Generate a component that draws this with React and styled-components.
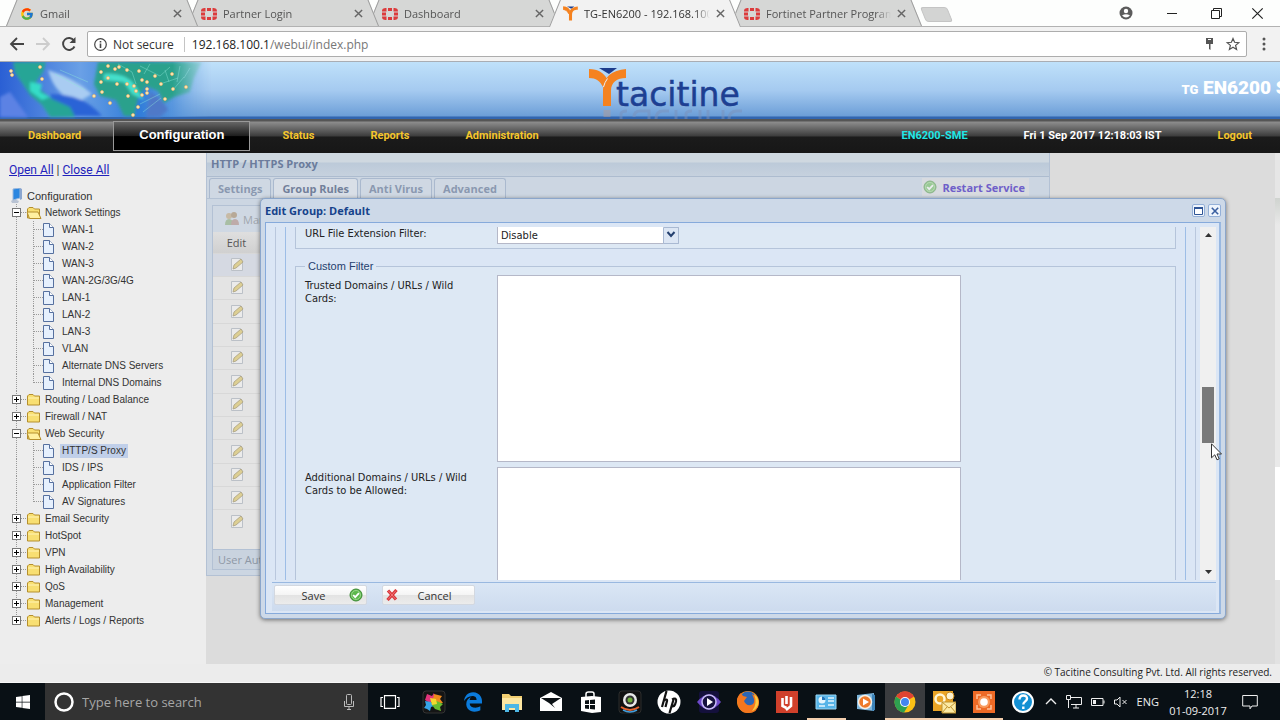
import { useState } from 'react';
import styled, { createGlobalStyle } from 'styled-components';
import { FcGoogle } from 'react-icons/fc';
import { FaWindows, FaEdgeLegacy } from 'react-icons/fa6';

const GlobalStyle = createGlobalStyle`
  * {
    box-sizing: border-box;
  }

  body {
    margin: 0;
    font-family: Roboto, Arial, sans-serif;
    font-size: 11px;
    color: #333;
  }

  button {
    padding: 0;
    border: 0;
    background: none;
    font: inherit;
    color: inherit;
  }

  svg {
    display: block;
    flex: none;
  }
`;

const UI_FONT = "'Open Sans', 'Noto Sans', sans-serif";
const FORM_FONT = "'DejaVu Sans Condensed', 'Noto Sans', sans-serif";
const PAGE_FONT = "'Liberation Sans', Arial, sans-serif";

const Screen = styled.div`
  min-height: 100vh;
  display: flex;
  flex-direction: column;
  overflow: hidden;
`;

/* ---------- browser ---------- */

const TabStrip = styled.div`
  height: 27px;
  display: flex;
  padding-left: 8px;
  background-color: #fdfefd;
  border-bottom: 1px solid #b2b2b2;
  font-family: ${UI_FONT};
`;

const TabBox = styled.div`
  position: relative;
  z-index: ${(props) => props.$order};
  flex: 0 1 181px;
  min-width: 0;
  height: 27px;
  display: flex;
  align-items: center;
  gap: 6px;
  padding: 0 7px 0 12px;
  font-size: 11px;
  color: ${(props) => (props.$active ? '#333' : '#555')};

  &::before,
  &::after {
    content: '';
    position: absolute;
    z-index: -1;
    top: 0;
    bottom: ${(props) => (props.$active ? '0' : '1px')};
    background-color: ${(props) => (props.$active ? '#f2f2f2' : '#d6d7d6')};
  }

  &::before {
    left: -2px;
    right: 50%;
    border-left: 1px solid #9c9c9c;
    transform: skewX(-22deg);
    transform-origin: bottom left;
  }

  &::after {
    left: 48%;
    right: -9px;
    border-right: 1px solid #9c9c9c;
    transform: skewX(22deg);
    transform-origin: bottom right;
  }
`;

const TabTitle = styled.span`
  flex: 1;
  overflow: hidden;
  white-space: nowrap;
  mask-image: linear-gradient(to right, #000 88%, transparent);
`;

const NewTab = styled.button`
  width: 27px;
  height: 15px;
  margin: 7px 0 0 10px;
  background-color: #d3d4d3;
  border: 1px solid #c4c4c4;
  border-radius: 3px;
  transform: skewX(22deg);
`;

const WindowControls = styled.div`
  margin-left: auto;
  display: flex;
  align-items: center;
  gap: 29px;
  padding-right: 16px;
`;

const Toolbar = styled.div`
  height: 35px;
  display: flex;
  align-items: center;
  gap: 10px;
  padding: 0 10px 0 9px;
  background-color: #f2f2f2;
  border-bottom: 1px solid #a9adb3;
`;

const Address = styled.div`
  flex: 1;
  height: 26px;
  display: flex;
  align-items: center;
  gap: 6px;
  padding: 0 6px;
  background-color: #fff;
  border: 1px solid #adadad;
  border-radius: 2px;
  font-family: ${UI_FONT};
  font-size: 12px;
  color: #333;
`;

const Divider = styled.span`
  width: 1px;
  height: 15px;
  margin: 0 1px 0 4px;
  background-color: #c4c4c4;
`;

const Url = styled.span`
  flex: 1;
  color: #777;

  b {
    font-weight: 400;
    color: #222;
  }
`;

/* ---------- page header ---------- */

// the banner is wider than the page and runs off its right side
const Banner = styled.header`
  height: 57px;
  display: grid;
  grid-template-columns: 1fr auto 1fr;
  margin-right: -50px;
  background: linear-gradient(#bfe1fa, #a5caf0 50%, #6d9fd8 94%, #3165b0 97%);
`;

const Model = styled.div`
  justify-self: end;
  align-self: center;
  padding: 0 15px 4px 0;
  white-space: nowrap;
  font-family: Impact, Roboto, sans-serif;
  font-weight: 900;
  font-size: 19px;
  line-height: 24px;
  color: #fff;

  small {
    font-size: 13px;
  }
`;

const NavBar = styled.nav`
  height: 34px;
  display: flex;
  align-items: center;
  background: linear-gradient(#555 2px, #8d8d8d 3px, #3c3c3c 17px, #1b1b1b 18px, #171717);
  font-weight: 700;
  line-height: 14px;
`;

const NavLink = styled.a`
  padding: 0 28px;
  color: #f5c62c;
  text-decoration: none;
`;

const CurrentLink = styled.a`
  height: 30px;
  margin: 0 4px;
  padding: 0 25px;
  border: 1px solid #999;
  background: linear-gradient(#666, #1d1d1d 50%, #000 52%);
  font-family: ${PAGE_FONT};
  font-size: 13px;
  line-height: 26px;
  color: #fff;
  text-decoration: none;
`;

const NavText = styled.span`
  padding: 0 28px;
  margin-left: ${(props) => (props.$push ? 'auto' : '0')};
  color: ${(props) => props.$color};
`;

/* ---------- tree ---------- */

const Main = styled.div`
  flex: 1;
  display: flex;
`;

const Sidebar = styled.aside`
  flex: none;
  width: 206px;
  padding: 9px 0 0 9px;
  background-color: #ededed;
  font-family: ${PAGE_FONT};
`;

const TreeActions = styled.div`
  font-family: Roboto, Arial, sans-serif;
  font-size: 12px;
  line-height: 17px;

  a {
    color: #2222bb;
  }
`;

const Tree = styled.ul`
  margin: 8px 0 0;
  padding: 0;
  list-style: none;
`;

const TreeRow = styled.li`
  height: 17px;
  display: flex;
  align-items: center;
  font-size: ${(props) => (props.$root ? '11px' : '10px')};
`;

const Toggle = styled.button`
  height: 17px;
`;

const TreeLink = styled.a`
  margin-left: ${(props) => props.$gap};
  padding: 0 2px;
  line-height: 14px;
  white-space: nowrap;
  color: #333;
  text-decoration: none;
  background-color: ${(props) => (props.$current ? '#c0cfe9' : 'transparent')};
`;

/* ---------- proxy panel ---------- */

const Content = styled.main`
  position: relative;
  flex: 1;
  min-width: 0;
  background-color: #dcdcdc;
`;

const Edge = styled.div`
  flex: none;
  width: 5px;
  background: linear-gradient(#e6e6e6 45px, #cfd3cf 45px, #e9e9e9 72px, #e9e9e9 314px, #fff 314px, #fff 427px, #e2e2e2 427px);
`;

const Panel = styled.section`
  display: flex;
  flex-direction: column;
  height: calc(100% - 88px);
  margin-right: 225px;
  background-color: #ccd6e2;
  border: 1px solid #b3c1d4;
  border-top: 0;
  font-family: ${UI_FONT};
`;

const PanelTitle = styled.h1`
  margin: 0;
  padding: 0 4px;
  height: 24px;
  line-height: 22px;
  font-size: 11px;
  background: linear-gradient(#cfd8e0 9px, #bccad9 10px, #c6d1de);
  border-bottom: 1px solid #adbccf;
  color: #6b7c9c;
`;

const PanelTabs = styled.div`
  display: flex;
  align-items: flex-end;
  gap: 2px;
  height: 22px;
  padding: 0 20px 0 2px;
  border-bottom: 1px solid #b4c2d4;
`;

const PanelTab = styled.button`
  height: 20px;
  padding: 0 8px;
  border: 1px solid #aab9ce;
  border-bottom: 0;
  border-radius: 3px 3px 0 0;
  background-color: ${(props) => (props.$active ? '#d9dfe7' : '#cfd8e3')};
  font-weight: 700;
  color: ${(props) => (props.$active ? '#72809a' : '#8a98b0')};
`;

const Restart = styled.button`
  display: flex;
  align-items: center;
  gap: 5px;
  height: 18px;
  margin: 0 0 2px auto;
  padding: 0 4px 0 1px;
  background-color: #d8dbe0;
  font-weight: 700;
  color: #6f5fc9;
`;

const PanelBody = styled.div`
  flex: 1;
  display: flex;
  flex-direction: column;
  margin: 6px 5px 5px;
  background-color: #e4e4e4;
  border: 1px solid #b3c1d4;
`;

const GridToolbar = styled.div`
  display: flex;
  align-items: center;
  gap: 3px;
  height: 26px;
  padding-left: 11px;
  background-color: #cfd8e3;
  color: #a0a6ad;
`;

const Grid = styled.table`
  width: 100%;
  border-collapse: collapse;
  table-layout: fixed;

  th {
    height: 21px;
    padding: 0;
    background: linear-gradient(#dfdfdf, #d0d0d0);
    font-weight: 400;
    color: #555;
  }

  td {
    height: 23px;
    padding: 0;
    border-top: 1px solid #d8d8d8;
  }

  tr:nth-child(3n) td {
    height: 24px;
  }

  tr:first-child td {
    background-color: #d5d9e2;
  }

  svg {
    margin: 0 auto;
  }
`;

const GridFooter = styled.div`
  margin-top: auto;
  padding: 0 5px;
  line-height: 19px;
  background-color: #c9d3df;
  border-top: 1px solid #b3c1d4;
  color: #8e97a5;
`;

/* ---------- edit window ---------- */

const Dialog = styled.section`
  position: absolute;
  z-index: 2;
  top: 45px;
  right: 49px;
  bottom: 45px;
  left: 54px;
  display: flex;
  flex-direction: column;
  padding: 0 4px 4px;
  background-color: #cdd9e8;
  border: 1px solid #8ba6cb;
  border-radius: 5px;
  box-shadow: 0 1px 4px rgba(0, 0, 0, 0.5);
  font-family: ${UI_FONT};
`;

const DialogHeader = styled.header`
  display: flex;
  align-items: center;
  gap: 3px;
  height: 23px;
`;

const DialogTitle = styled.h2`
  flex: 1;
  margin: 0;
  font-size: 11px;
  color: #15428b;
`;

const DialogTool = styled.button`
  width: 13px;
  height: 13px;
  display: grid;
  place-items: center;
  background-color: #eef4fc;
  border: 1px solid #94b0d8;
  border-radius: 2px;
`;

const DialogBody = styled.div`
  flex: 1;
  min-height: 0;
  display: flex;
  flex-direction: column;
  padding: 4px 3px 2px 6px;
  background-color: #dbe6f5;
  border: 1px solid #86aadb;
  border-right: 2px solid #99b8e0;
`;

const Viewport = styled.div`
  flex: 1;
  min-height: 0;
  display: flex;
  gap: 4px;
  padding-left: 3px;
  overflow: hidden;
`;

const Frame = styled.div`
  flex: 1;
  min-width: 0;
  height: 900px;
  padding: 0 9px;
  border: 1px solid ${(props) => props.$line};
  border-width: 0 1px;
`;

const formBox = `
  margin: 0;
  border: 1px solid #b5c4da;
  background-color: #dde8f4;
`;

const FilterBox = styled.div`
  ${formBox}
  height: 22px;
  padding: 0 9px;
  border-top: 0;

  label {
    padding-top: 0;
  }
`;

const FieldSet = styled.fieldset`
  ${formBox}
  height: 640px;
  margin-top: 11px;
  padding: 3px 9px 0;
`;

const Legend = styled.legend`
  padding: 0 3px;
  line-height: 12px;
  font-family: ${PAGE_FONT};
  color: #26406e;
`;

const Field = styled.div`
  display: grid;
  grid-template-columns: 180px minmax(0, 464px);
  column-gap: 12px;
  margin-bottom: 5px;
`;

const Label = styled.label`
  padding-top: 4px;
  font-family: ${FORM_FONT};
  font-size: 11px;
  line-height: 13px;
  color: #222;
`;

const TextArea = styled.textarea`
  height: 187px;
  margin: 0;
  background-color: #fff;
  border: 1px solid #b5b8c8;
  resize: none;
`;

const SelectBox = styled.div`
  position: relative;
  width: 182px;

  svg {
    position: absolute;
    top: 0;
    right: 0;
    pointer-events: none;
  }
`;

const Select = styled.select`
  display: block;
  width: 100%;
  height: 17px;
  padding: 0 3px;
  appearance: none;
  background-color: #fff;
  border: 1px solid #b5b8c8;
  border-top: 0;
  border-radius: 0;
  font-family: ${FORM_FONT};
  font-size: 11px;
  color: #222;
`;

const Scrollbar = styled.div`
  width: 16px;
  display: flex;
  flex-direction: column;
  padding: 0 2px;
  background-color: #f0f0f0;
`;

const ScrollButton = styled.button`
  height: 16px;
  display: grid;
  place-items: center;
`;

const Track = styled.div`
  flex: 1;
  display: grid;
  grid-template-rows: 144fr 57fr 121fr;

  &::before {
    content: '';
  }
`;

const Thumb = styled.div`
  background-color: #797979;
`;

const Pointer = styled.svg`
  position: absolute;
  z-index: 3;
  top: 244px;
  right: 2px;
`;

const DialogFooter = styled.footer`
  display: flex;
  gap: 15px;
  height: 29px;
  margin-top: 2px;
  padding: 2px;
  border-top: 1px solid #99b8e0;
  background: linear-gradient(#dae6f5, #cddbee);
`;

const ActionButton = styled.button`
  width: 93px;
  height: 20px;
  display: flex;
  align-items: center;
  padding: 0 3px;
  background: linear-gradient(#fff, #f4f4f4 50%, #e3e3e3 52%, #ececec);
  border: 1px solid #d3d8e0;
  border-radius: 2px;

  span {
    flex: 1;
    text-align: center;
  }
`;

const Copyright = styled.footer`
  height: 19px;
  padding-right: 8px;
  background-color: #ececec;
  border-bottom: 1px solid #f7f7f7;
  font-family: ${UI_FONT};
  font-size: 10px;
  line-height: 16px;
  text-align: right;
  color: #222;
`;

/* ---------- taskbar ---------- */

const Taskbar = styled.div`
  height: 37px;
  display: flex;
  background-color: #091015;
  font-family: ${UI_FONT};
  color: #eee;
`;

const StartButton = styled.button`
  width: 45px;
  display: grid;
  place-items: center;
  color: #fff;
`;

const Search = styled.label`
  width: 323px;
  display: flex;
  align-items: center;
  gap: 8px;
  padding: 0 12px 0 9px;
  background-color: #333;
`;

const SearchInput = styled.input`
  flex: 1;
  min-width: 0;
  padding: 0;
  border: 0;
  background: none;
  font-family: ${UI_FONT};
  font-size: 13px;
  color: #ddd;

  &::placeholder {
    color: #a6a6a6;
  }
`;

const TaskView = styled.button`
  width: 46px;
  padding-left: 12px;
`;

const Apps = styled.div`
  flex: 1;
  display: flex;
`;

const AppButton = styled.button`
  flex: 1;
  display: grid;
  place-items: center;
  background-color: ${(props) => (props.$focused ? '#3a3c3f' : 'transparent')};
  box-shadow: ${(props) => (props.$open ? 'inset 0 -2px #f3cfae' : 'none')};
`;

const Tray = styled.div`
  display: flex;
  align-items: center;
  gap: 9px;
  padding: 0 22px 0 2px;
  font-size: 11px;
`;

const Clock = styled.time`
  width: 60px;
  margin-right: 5px;
  line-height: 17px;
  text-align: center;
  white-space: nowrap;
`;

/* ---------- icons ---------- */

const CloseIcon = ({ size = 9, color = '#666', stroke = 1.6 }) => (
  <svg width={size} height={size} viewBox="0 0 10 10" stroke={color} strokeWidth={stroke}>
    <path d="M1 1l8 8M9 1L1 9" />
  </svg>
);

const FortinetIcon = () => (
  <svg width="16" height="12" viewBox="0 0 16 12" fill="#dc3b3c">
    <path d="M6 0h4v3H6zM6 9h4v3H6zM0 4.500h4v3H0zM12 4.500h4v3h-4zM0 3.500C0 1 1 0 4.500 0v3.500zM16 3.500C16 1 15 0 11.500 0v3.500zM0 8.500C0 11 1 12 4.500 12V8.500zM16 8.500c0 2.500-1 3.500-4.500 3.500V8.500z" />
  </svg>
);

const TacitineMark = ({ width = 15, height = 15 }) => (
  <svg width={width} height={height} viewBox="0 0 38 39">
    <path d="M10 1h19l-8 6z" fill="#1c3c8c" />
    <path d="M0 2c9 0 15 4 18 11l-4 7C11 13 7 10 0 9z" fill="#f5821f" stroke="#f5821f" strokeWidth="2" />
    <path d="M38 1v9c-9 0-15 3-15 14v14h-8V22C15 9 24 2 38 1z" fill="#f5821f" />
  </svg>
);

const Logo = () => (
  <svg width="154" height="57" viewBox="0 0 154 57">
    <g transform="translate(1 6)">
      <path d="M10 0h18l-8 6z" fill="#1c3c8c" />
      <path d="M0 1c9 0 15 4 18 10l-4 8C11 13 7 10 0 10z" fill="#f5821f" />
      <path d="M37 1v9c-9 0-15 4-15 13v15h-8V22C14 9 23 2 37 1z" fill="#f5821f" />
      <path d="M18.500 10.500q-3 4-4 8.500" fill="none" stroke="#e8f0f8" />
    </g>
    <text x="28" y="44" fontFamily="'DejaVu Sans', sans-serif" fontSize="33" fill="#1d3f92" stroke="#1d3f92" strokeWidth="0.500">
      tacitine
    </text>
    <g fill="none" stroke="#7b92bb" strokeWidth="3" opacity="0.5">
      <path d="M19 48v7" stroke="#b39b94" strokeWidth="7" />
      <path d="M33 57v-5q0-3 6-3M46 55q0-6 6-6h9v8M81 49h-6q-7 0-7 8M88 48v9M98 57v-5q0-3 6-3M112 48v9M120 48v9M135 48v9M154 49h-5q-8 0-8 8" />
    </g>
  </svg>
);

const Globe = () => (
  <svg width="230" height="57" viewBox="0 0 230 57">
    <defs>
      <linearGradient id="sea">
        <stop offset="0" stopColor="#2a5fd4" />
        <stop offset="0.35" stopColor="#6aa0e6" />
        <stop offset="0.6" stopColor="#2f7bd8" />
        <stop offset="0.9" stopColor="#6ba4e2" stopOpacity="0.6" />
        <stop offset="1" stopColor="#9dc5ee" stopOpacity="0" />
      </linearGradient>
      <linearGradient id="fade">
        <stop offset="0.750" stopColor="#fff" />
        <stop offset="0.920" stopColor="#000" />
      </linearGradient>
      <mask id="fade-out">
        <path d="M0 0h230v57H0z" fill="url(#fade)" />
      </mask>
      <filter id="soft">
        <feGaussianBlur stdDeviation="1.500" />
      </filter>
    </defs>
    <g mask="url(#fade-out)">
      <path d="M0 0h230v55H0z" fill="url(#sea)" />
      <g filter="url(#soft)">
        <path d="M0 35l10-5 18 25H0z" fill="#5b82e4" />
        <path d="M48 8q26 8 44 24l-14 8Q55 34 48 8z" fill="#a9ccf2" />
        <path d="M50 32q34 0 52 22H58z" fill="#2b63d6" />
        <path d="M13 0h33l-3 10-7 10 5 8 11 9 18 8 5 10H50l-8-12-12-10-8-12-7-10z" fill="#27a596" />
        <path d="M30 20l12 2-2 8 10 5-8 3-12-9z" fill="#35dcc8" />
        <path d="M98 0h104l-8 16-4 14-16 5-10 6-6-12-12-5-8 12-4 18h-10l-8-16-16-4-6-12z" fill="#2ba18c" />
        <path d="M104 12q20-2 30 10l10 16-12-6-8-12-20-2z" fill="#45e0cc" />
        <path d="M150 30q12 6 18 18l-8 7h-14z" fill="#4f79c8" />
      </g>
      <path d="M118 2l14 8 4 12M140 4l20 10 10-9M160 22l18-6M172 29l12-14M55 12l30 16M60 8l28 12M140 42l20-10M143 50l18-14M150 2l-6 10M165 8l4 12M180 4l-3 16M190 6l-6 10" stroke="#8fe8d8" strokeWidth="0.600" fill="none" opacity="0.700" />
    </g>
    <g fill="#fff3c4" stroke="#e5b26a" strokeWidth="0.800">
      {[[11, 9], [12, 13], [40, 5], [42, 17], [108, 4], [115, 7], [119, 5], [101, 10], [127, 8], [139, 9], [155, 14], [172, 12], [108, 16], [101, 20], [117, 22], [127, 22], [134, 24], [142, 18], [147, 20], [136, 29], [147, 27], [161, 22], [173, 27], [186, 25], [94, 34], [102, 30], [128, 34], [142, 33], [165, 37], [110, 41], [138, 45], [133, 53], [147, 31]].map(([x, y]) => (
        <circle key={`${x}-${y}`} cx={x} cy={y} r="1.500" />
      ))}
    </g>
  </svg>
);

const ComputerIcon = () => (
  <svg width="16" height="16" viewBox="0 0 16 16">
    <path d="M5 11l5 2-1 2H3l-1-2z" fill="#b9c3d3" />
    <path d="M4 1l7-1v10l-7 2z" fill="#2a86e0" stroke="#9bb8dd" />
    <path d="M11 0l2 1v10l-2 1z" fill="#8aa5cf" />
  </svg>
);

// branch lines are drawn with the box so that rows join into one dotted line
const ToggleIcon = ({ open, last }) => (
  <svg width="17" height="17" viewBox="0 0 17 17">
    <path d={`M7.500 0v4M12 8.500h5${last ? '' : 'M7.500 13v4'}`} stroke="#999" strokeDasharray="1 1" />
    <rect x="3.500" y="4.500" width="8" height="8" fill="#fff" stroke="#777" />
    <path d={open ? 'M5 8.500h5' : 'M5 8.500h5M7.500 6v5'} stroke="#000" />
  </svg>
);

const FolderIcon = ({ open }) => (
  <svg width="16" height="14" viewBox="0 0 16 14">
    <path d="M1.500 12V3l1.500-1.500h4L8.500 3h5v9z" fill="#f8df72" stroke="#b58f2e" />
    {open ? (
      <path d="M3.500 12.500L1 6h11l3 6.500z" fill="#fff0a0" stroke="#b58f2e" />
    ) : (
      <path d="M2 5h11" stroke="#fff3b5" />
    )}
  </svg>
);

const PageIcon = ({ last }) => (
  <svg width="47" height="17" viewBox="0 0 47 17">
    <path d="M7.500 0v17" stroke="#999" strokeDasharray="1 1" />
    <path d={`M24.500 0v${last ? 9 : 17}M25 8.500h9`} stroke="#999" strokeDasharray="1 1" fill="none" />
    <path d="M34.500 2.500h6l4 4v9h-10z" fill="#e6f0fd" stroke="#56709f" />
    <path d="M40.500 2.500v4h4" fill="#fff" stroke="#56709f" />
  </svg>
);

const PencilIcon = () => (
  <svg width="14" height="15" viewBox="0 0 14 15">
    <path d="M1.500 1.500h9l2 3v9h-11z" fill="#ebebeb" stroke="#bbc0c7" />
    <path d="M3 12l1-4 7-6 2 3-7 6z" fill="#ddcf93" stroke="#a9a081" strokeWidth="0.800" />
  </svg>
);

const GroupIcon = () => (
  <svg width="16" height="14" viewBox="0 0 16 14" opacity="0.600">
    <circle cx="5" cy="4" r="3" fill="#c2a77d" />
    <circle cx="10" cy="3" r="3" fill="#a88a66" />
    <path d="M1 13q0-6 4-6t5 6z" fill="#8fae7b" />
    <path d="M7 13q0-6 4-6t4 6z" fill="#b38e84" />
  </svg>
);

const CheckIcon = ({ faded }) => (
  <svg width="14" height="14" viewBox="0 0 14 14" opacity={faded ? 0.5 : 1}>
    <circle cx="7" cy="7" r="6" fill="#5cb84c" stroke="#3c8a34" />
    <circle cx="7" cy="7" r="4.500" fill="none" stroke="#a5dc95" strokeWidth="0.800" />
    <path d="M4.200 7l2 2.200 3.800-4" fill="none" stroke="#fff" strokeWidth="1.800" />
  </svg>
);

const tabs = [
  { title: 'Gmail', icon: <FcGoogle size={14} /> },
  { title: 'Partner Login', icon: <FortinetIcon /> },
  { title: 'Dashboard', icon: <FortinetIcon /> },
  { title: 'TG-EN6200 - 192.168.100.1', icon: <TacitineMark />, active: true },
  { title: 'Fortinet Partner Program', icon: <FortinetIcon /> },
];

const tree = [
  {
    name: 'Network Settings',
    items: ['WAN-1', 'WAN-2', 'WAN-3', 'WAN-2G/3G/4G', 'LAN-1', 'LAN-2', 'LAN-3', 'VLAN', 'Alternate DNS Servers', 'Internal DNS Domains'],
  },
  { name: 'Routing / Load Balance' },
  { name: 'Firewall / NAT' },
  { name: 'Web Security', items: ['HTTP/S Proxy', 'IDS / IPS', 'Application Filter', 'AV Signatures'] },
  { name: 'Email Security' },
  { name: 'HotSpot' },
  { name: 'VPN' },
  { name: 'High Availability' },
  { name: 'QoS' },
  { name: 'Management' },
  { name: 'Alerts / Logs / Reports' },
];

const AppIcon = ({ children }) => (
  <svg width="24" height="24" viewBox="0 0 24 24">
    {children}
  </svg>
);

const apps = [
  {
    name: 'Paint tool',
    icon: (
      <AppIcon>
        <rect x="1" y="1" width="22" height="22" rx="3" fill="#151515" stroke="#333" />
        <path d="M5 4l5 2 2-3 1 6-5 4-5-3z" fill="#e2357c" />
        <path d="M12 4l4 1 4 1-2 3 3 4-6 0-4-4z" fill="#f08a1c" />
        <path d="M3 11l6 1 3 4-3 1-1 4-3-2-3-1 2-3z" fill="#36a3e6" />
        <path d="M12 10l5 2 4 2-3 3 1 4-6-2-3-4z" fill="#68bc31" />
        <path d="M8 8l6 1 1 5-5 1z" fill="#f3d82e" />
      </AppIcon>
    ),
  },
  { name: 'Edge', icon: <FaEdgeLegacy size={20} color="#0b7bdc" /> },
  {
    name: 'File Explorer',
    icon: (
      <AppIcon>
        <path d="M2 4h7l2 2h11v14H2z" fill="#f2cf72" />
        <path d="M2 8h20v12H2z" fill="#fde7a2" />
        <path d="M5 22v-8h14v8h-4v-4H9v4z" fill="#4db7e5" />
      </AppIcon>
    ),
  },
  {
    name: 'Mail',
    icon: (
      <AppIcon>
        <path d="M1 8l11-6 11 6v13H1z" fill="#fff" />
        <path d="M2 8h20l-9 6 3 4-6-5z" fill="#0b1115" />
      </AppIcon>
    ),
  },
  {
    name: 'Store',
    icon: (
      <AppIcon>
        <path d="M7 7V4q0-2 2.500-2H13q2 0 2 2v3" fill="none" stroke="#fff" strokeWidth="1.500" />
        <path d="M2 7l11-1 9 1v15l-9 1-11-2z" fill="#fff" />
        <path d="M6 10.500l4-.5v4H6zM11 10l5-.5V14h-5zM6 15h4v4l-4-.5zM11 15h5v4.500l-5-.5z" fill="#0b1115" />
      </AppIcon>
    ),
  },
  {
    name: 'Camera',
    icon: (
      <AppIcon>
        <rect x="1" y="1" width="22" height="22" rx="3" fill="#111" stroke="#2c2c2c" />
        <circle cx="12" cy="10" r="7" fill="#e9e9e9" />
        <circle cx="12" cy="10" r="4.500" fill="#333" />
        <circle cx="12" cy="10" r="2.500" fill="#6fae3b" />
        <path d="M3 17q9 6 18 0" fill="none" stroke="#e8622c" strokeWidth="2" />
        <path d="M5 20q7 4 14 0" fill="none" stroke="#42a0e0" strokeWidth="1.500" />
      </AppIcon>
    ),
  },
  {
    name: 'HP',
    icon: (
      <AppIcon>
        <circle cx="12" cy="12" r="11.500" fill="#fff" />
        <path d="M9.500 1L5 17M6.500 11q4-3 3.500 0L8.500 17M17 8l-4.500 15M15 9.500q5-2.500 4 2l-1 3q-1 2.500-4 1.500" fill="none" stroke="#111" strokeWidth="2.200" />
      </AppIcon>
    ),
  },
  {
    name: 'Media player',
    icon: (
      <AppIcon>
        <rect x="2" y="1" width="20" height="22" rx="3" fill="#14103c" />
        <path d="M0 12q12-15 24 0-12 15-24 0z" fill="#6d49c9" />
        <circle cx="12" cy="12" r="7" fill="#16123f" stroke="#c9bdf7" strokeWidth="1.500" />
        <path d="M10 8l6 4-6 4z" fill="#fff" />
      </AppIcon>
    ),
  },
  {
    name: 'Firefox',
    icon: (
      <AppIcon>
        <circle cx="12" cy="12" r="11" fill="#f08a1e" />
        <circle cx="12" cy="10" r="8.500" fill="#2c66b5" />
        <path d="M1 9q2-5 4-6l2 3 4 1-3 4q2 5 7 4 4-1 3-6l-2-5q7 3 7 9-1 10-11 10T1 9z" fill="#f3761e" />
        <path d="M18 4q6 5 4 11-2 5-6 6 6-7 2-17z" fill="#fcca3e" />
      </AppIcon>
    ),
  },
  {
    name: 'Reader',
    icon: (
      <AppIcon>
        <path d="M1 1h22v22H1z" fill="#d0402b" />
        <path d="M7.500 8v8l4 2M11.500 6v8M16 7v9l-5 4" fill="none" stroke="#fff" strokeWidth="2.600" />
      </AppIcon>
    ),
  },
  {
    name: 'Control panel',
    open: true,
    icon: (
      <AppIcon>
        <path d="M2 5h20v14H2z" fill="#56b4e8" stroke="#9ad7f5" />
        <circle cx="8" cy="10" r="3.500" fill="#e5f5fd" />
        <path d="M8 10V6.500a3.500 3.500 0 0 1 3.500 3.500z" fill="#2276bb" />
        <path d="M14 8h6M14 11h6M5 16h6M14 15h6" stroke="#e5f5fd" strokeWidth="1.500" />
      </AppIcon>
    ),
  },
  {
    name: 'Video',
    icon: (
      <AppIcon>
        <path d="M3 5l17-2v18L3 19z" fill="#7fb7dd" />
        <path d="M18 4l3 1v15l-3 1z" fill="#3c82b7" />
        <circle cx="11" cy="12" r="6.500" fill="#ee7a2b" stroke="#f7f0e6" strokeWidth="1.500" />
        <path d="M9 8.500l6 3.500-6 3.500z" fill="#fff" />
      </AppIcon>
    ),
  },
  {
    name: 'Chrome',
    open: true,
    focused: true,
    icon: (
      <AppIcon>
        <circle cx="12" cy="12" r="10.500" fill="#fbc116" />
        <path d="M12 12L3 6.500a10.500 10.500 0 0 1 18.100 0z" fill="#df4333" />
        <path d="M3 6.500a10.500 10.500 0 0 0 8 16L15.500 15z" fill="#2ea150" />
        <circle cx="12" cy="12" r="5" fill="#fff" />
        <circle cx="12" cy="12" r="4" fill="#4486ee" />
      </AppIcon>
    ),
  },
  {
    name: 'Outlook',
    open: true,
    icon: (
      <AppIcon>
        <path d="M1 1h20v20H1z" fill="#eba526" />
        <circle cx="8" cy="9" r="4.500" fill="none" stroke="#fff6d5" strokeWidth="2.500" />
        <circle cx="18" cy="6" r="4" fill="#fdf3cf" stroke="#c98a1c" />
        <path d="M10 12h14v11H10z" fill="#fbeaa5" stroke="#bf932e" />
        <path d="M10 12l7 6 7-6M10 23l5-6M24 23l-5-6" fill="none" stroke="#bf932e" />
      </AppIcon>
    ),
  },
  {
    name: 'Recorder',
    open: true,
    icon: (
      <AppIcon>
        <path d="M1 1h22v22H1z" fill="#ee6a26" />
        <path d="M5 9V5h4M15 5h4v4M19 15v4h-4M9 19H5v-4" fill="none" stroke="#ffc29a" strokeWidth="1.500" />
        <circle cx="12" cy="12" r="6" fill="#f99b5e" />
        <circle cx="12" cy="12" r="3.800" fill="#fff" />
      </AppIcon>
    ),
  },
  {
    name: 'Help',
    icon: (
      <AppIcon>
        <circle cx="12" cy="12" r="10" fill="#1490d3" stroke="#fff" strokeWidth="2" />
        <path d="M8.500 9.500q0-4 3.800-4t3.700 3.300c0 2.600-3.700 2.700-3.700 5.700M12.300 16.500V19" fill="none" stroke="#fff" strokeWidth="2.400" />
      </AppIcon>
    ),
  },
];

const BrowserTab = ({ tab, order }) => (
  <TabBox $active={tab.active} $order={tab.active ? 10 : order}>
    {tab.icon}
    <TabTitle>{tab.title}</TabTitle>
    <button aria-label={`Close ${tab.title}`}>
      <CloseIcon />
    </button>
  </TabBox>
);

const Browser = () => (
  <>
    <TabStrip>
      {tabs.map((tab, i) => (
        <BrowserTab key={tab.title} tab={tab} order={tabs.length - i} />
      ))}
      <NewTab aria-label="New tab" />
      <WindowControls>
        <button aria-label="Profile">
          <svg width="14" height="14" viewBox="0 0 14 14">
            <circle cx="7" cy="7" r="6.500" fill="#5c5c5c" />
            <circle cx="7" cy="5" r="2.200" fill="#fff" />
            <path d="M3 9.500q4-2.500 8 0-4 4-8 0z" fill="#fff" />
          </svg>
        </button>
        <button aria-label="Minimize">
          <svg width="20" height="10" viewBox="0 0 20 10" stroke="#222">
            <path d="M5 5.500h10" />
          </svg>
        </button>
        <button aria-label="Restore">
          <svg width="11" height="11" viewBox="0 0 11 11" fill="none" stroke="#222">
            <path d="M.5 2.500h8v8h-8zM2.500 2.500v-2h8v8h-2" />
          </svg>
        </button>
        <button aria-label="Close window">
          <CloseIcon size={13} color="#222" stroke={0.9} />
        </button>
      </WindowControls>
    </TabStrip>
    <Toolbar>
      <button aria-label="Back">
        <svg width="16" height="14" viewBox="0 0 16 14" fill="none" stroke="#444" strokeWidth="1.800">
          <path d="M15 7H2M8 1L2 7l6 6" />
        </svg>
      </button>
      <button aria-label="Forward">
        <svg width="16" height="14" viewBox="0 0 16 14" fill="none" stroke="#ccc" strokeWidth="1.800">
          <path d="M1 7h13M8 1l6 6-6 6" />
        </svg>
      </button>
      <button aria-label="Reload">
        <svg width="16" height="16" viewBox="0 0 16 16">
          <path d="M13.500 10.500a6 6 0 1 1-.5-6" fill="none" stroke="#444" strokeWidth="1.900" />
          <path d="M14.500 1v6h-6z" fill="#444" />
        </svg>
      </button>
      <Address>
        <svg width="13" height="13" viewBox="0 0 13 13" fill="none" stroke="#444">
          <circle cx="6.500" cy="6.500" r="5.800" strokeWidth="1.200" />
          <path d="M6.500 5.500v4.500M6.500 3v1.500" strokeWidth="1.600" />
        </svg>
        Not secure
        <Divider />
        <Url>
          <b>192.168.100.1</b>/webui/index.php
        </Url>
        <svg width="9" height="12" viewBox="0 0 9 12">
          <path d="M1 0h7v6H5.500v6L4 11V6H1z" fill="#555" />
          <path d="M3 1.500h3" stroke="#fff" />
        </svg>
        <svg width="20" height="14" viewBox="-6 0 20 14">
          <path d="M7 1.500l1.600 3.800 4.200.4-3.200 2.700 1 4.100L7 10.300l-3.600 2.200 1-4.100L1.200 5.700l4.200-.4z" fill="none" stroke="#555" strokeWidth="1.200" />
        </svg>
      </Address>
      <button aria-label="Menu">
        <svg width="13" height="14" viewBox="0 0 13 14" fill="#555">
          <circle cx="7" cy="2" r="1.500" />
          <circle cx="7" cy="7" r="1.500" />
          <circle cx="7" cy="12" r="1.500" />
        </svg>
      </button>
    </Toolbar>
  </>
);

const Header = () => (
  <>
    <Banner>
      <Globe />
      <Logo />
      <Model>
        <small>TG</small> EN6200 SME
      </Model>
    </Banner>
    <NavBar>
      <NavLink href="#dashboard">Dashboard</NavLink>
      <CurrentLink href="#configuration">Configuration</CurrentLink>
      <NavLink href="#status">Status</NavLink>
      <NavLink href="#reports">Reports</NavLink>
      <NavLink href="#administration">Administration</NavLink>
      <NavText $push $color="#1fe8e6">
        EN6200-SME
      </NavText>
      <NavText $color="#fff">Fri 1 Sep 2017 12:18:03 IST</NavText>
      <NavLink href="#logout">Logout</NavLink>
    </NavBar>
  </>
);

const Navigation = () => {
  const names = tree.filter((group) => group.items).map((group) => group.name);
  const [open, setOpen] = useState(names);

  const toggle = (name) =>
    setOpen(open.includes(name) ? open.filter((n) => n !== name) : [...open, name]);

  return (
    <Sidebar>
      <TreeActions>
        <a href="#open" onClick={() => setOpen(names)}>
          Open All
        </a>{' '}
        |{' '}
        <a href="#close" onClick={() => setOpen([])}>
          Close All
        </a>
      </TreeActions>
      <Tree>
        <TreeRow $root>
          <ComputerIcon />
          <TreeLink href="#root" $gap="0">
            Configuration
          </TreeLink>
        </TreeRow>
        {tree.map((group, i) => {
          const isOpen = open.includes(group.name);
          return [
            <TreeRow key={group.name}>
              <Toggle aria-label={`Toggle ${group.name}`} onClick={() => toggle(group.name)}>
                <ToggleIcon open={isOpen} last={i === tree.length - 1} />
              </Toggle>
              <FolderIcon open={isOpen} />
              <TreeLink href="#group" $gap="1px">
                {group.name}
              </TreeLink>
            </TreeRow>,
            isOpen &&
              group.items?.map((item, j) => (
                <TreeRow key={item}>
                  <PageIcon last={j === group.items.length - 1} />
                  <TreeLink href="#item" $gap="4px" $current={item === 'HTTP/S Proxy'}>
                    {item}
                  </TreeLink>
                </TreeRow>
              )),
          ];
        })}
      </Tree>
    </Sidebar>
  );
};

const ProxyPanel = () => (
  <Panel>
    <PanelTitle>HTTP / HTTPS Proxy</PanelTitle>
    <PanelTabs>
      <PanelTab>Settings</PanelTab>
      <PanelTab $active>Group Rules</PanelTab>
      <PanelTab>Anti Virus</PanelTab>
      <PanelTab>Advanced</PanelTab>
      <Restart>
        <CheckIcon faded />
        Restart Service
      </Restart>
    </PanelTabs>
    <PanelBody>
      <GridToolbar>
        <GroupIcon />
        Manage
      </GridToolbar>
      <Grid>
        <colgroup>
          <col width="47" />
          <col />
        </colgroup>
        <thead>
          <tr>
            <th>Edit</th>
            <th />
          </tr>
        </thead>
        <tbody>
          {[...Array(12)].map((_, i) => (
            <tr key={i}>
              <td>
                <PencilIcon />
              </td>
              <td />
            </tr>
          ))}
        </tbody>
      </Grid>
      <GridFooter>User Authentication</GridFooter>
    </PanelBody>
  </Panel>
);

const EditGroup = () => (
  <Dialog role="dialog" aria-labelledby="edit-title">
    <DialogHeader>
      <DialogTitle id="edit-title">Edit Group: Default</DialogTitle>
      <DialogTool aria-label="Maximize">
        <svg width="9" height="8" viewBox="0 0 9 8">
          <path d="M.5 1v6.500h8V1z" fill="#fff" stroke="#2f5596" />
          <path d="M0 1h9" stroke="#2f5596" strokeWidth="2" />
        </svg>
      </DialogTool>
      <DialogTool aria-label="Close">
        <CloseIcon size={8} color="#3a5fa0" stroke={2} />
      </DialogTool>
    </DialogHeader>
    <DialogBody>
      <Viewport>
        <Frame $line="#b9c7dd">
          <Frame $line="#9dbde6">
            <FilterBox>
              <Field>
                <Label htmlFor="extension">URL File Extension Filter:</Label>
                <SelectBox>
                  <Select id="extension" defaultValue="Disable">
                    <option>Disable</option>
                    <option>Enable</option>
                  </Select>
                  <svg width="16" height="17" viewBox="0 0 16 17">
                    <path d="M.5.5h15v16H.5z" fill="#dce6f4" stroke="#a9b9d2" />
                    <path d="M4.500 5l3.500 4 3.500-4" fill="none" stroke="#24406f" strokeWidth="2" />
                  </svg>
                </SelectBox>
              </Field>
            </FilterBox>
            <FieldSet>
              <Legend>Custom Filter</Legend>
              <Field>
                <Label htmlFor="trusted">Trusted Domains / URLs / Wild Cards:</Label>
                <TextArea id="trusted" />
              </Field>
              <Field>
                <Label htmlFor="additional">
                  Additional Domains / URLs / Wild Cards to be Allowed:
                </Label>
                <TextArea id="additional" />
              </Field>
            </FieldSet>
          </Frame>
        </Frame>
        <Scrollbar>
          <ScrollButton aria-label="Scroll up">
            <svg width="7" height="4" viewBox="0 0 7 4">
              <path d="M0 4l3.500-4L7 4z" fill="#333" />
            </svg>
          </ScrollButton>
          <Track>
            <Thumb />
          </Track>
          <ScrollButton aria-label="Scroll down">
            <svg width="7" height="4" viewBox="0 0 7 4">
              <path d="M0 0l3.500 4L7 0z" fill="#333" />
            </svg>
          </ScrollButton>
        </Scrollbar>
      </Viewport>
      <DialogFooter>
        <ActionButton>
          <span>Save</span>
          <CheckIcon />
        </ActionButton>
        <ActionButton>
          <svg width="12" height="12" viewBox="0 0 12 12">
            <path d="M2 1.500l8 9M10.500 1l-9 10" stroke="#d8363a" strokeWidth="3.200" />
            <path d="M2.500 2l7 8M10 1.500l-8 9" stroke="#f37476" />
          </svg>
          <span>Cancel</span>
        </ActionButton>
      </DialogFooter>
    </DialogBody>
    <Pointer width="12" height="18" viewBox="0 0 12 18">
      <path d="M.5.8v14l3.300-3 2.200 5 2.200-1-2.200-4.800h4.500z" fill="#fff" stroke="#333" />
    </Pointer>
  </Dialog>
);

const WindowsTaskbar = () => (
  <Taskbar>
    <StartButton aria-label="Start">
      <FaWindows size={16} />
    </StartButton>
    <Search>
      <svg width="20" height="20" viewBox="0 0 20 20">
        <circle cx="10" cy="10" r="8.500" fill="none" stroke="#fff" strokeWidth="2.500" />
      </svg>
      <SearchInput placeholder="Type here to search" />
      <svg width="14" height="18" viewBox="0 0 14 18" fill="none" stroke="#bbb">
        <rect x="4.500" y="1.500" width="5" height="10" rx="1" />
        <path d="M2.500 8v5.500h9V8M7 13.500V17M5 16.500h4" />
      </svg>
    </Search>
    <TaskView aria-label="Task view">
      <svg width="20" height="14" viewBox="0 0 20 14" fill="none" stroke="#fff" strokeWidth="1.200">
        <path d="M4.500.700h11v12.600h-11zM3 2.500H1v9h2M17 2.500h2v9h-2" />
      </svg>
    </TaskView>
    <Apps>
      {apps.map((app) => (
        <AppButton key={app.name} aria-label={app.name} $open={app.open} $focused={app.focused}>
          {app.icon}
        </AppButton>
      ))}
    </Apps>
    <Tray>
      <svg width="12" height="7" viewBox="0 0 12 7" fill="none" stroke="#eee" strokeWidth="1.400">
        <path d="M1 6l5-5 5 5" />
      </svg>
      <svg width="16" height="14" viewBox="0 0 16 14" fill="none" stroke="#eee">
        <path d="M5 2.500h10.500v7H5M10 9.500V13M7 13h6M.5.500h4v4h-4zM2.500 4.500V13" />
      </svg>
      <svg width="14" height="10" viewBox="0 0 14 10">
        <path d="M.5 1.500h11.500v7H.5z" fill="none" stroke="#eee" />
        <path d="M2 3h3v4H2zM12.500 3.500h1v3h-1z" fill="#eee" />
      </svg>
      <svg width="14" height="12" viewBox="0 0 14 12" fill="none" stroke="#eee">
        <path d="M.5 4v4H3l3 3V1L3 4zM8.500 4l4 4M12.500 4l-4 4" />
      </svg>
      <span>ENG</span>
      <Clock>
        12:18
        <br />
        01-09-2017
      </Clock>
      <svg width="16" height="16" viewBox="0 0 16 16" fill="none" stroke="#eee">
        <path d="M.700 1.500h14.600v10.500H10L8 14.800V12H.700z" />
      </svg>
    </Tray>
  </Taskbar>
);

const App = () => {
  return (
    <Screen>
      <GlobalStyle />
      <Browser />
      <Header />
      <Main>
        <Navigation />
        <Content>
          <ProxyPanel />
          <EditGroup />
        </Content>
        <Edge />
      </Main>
      <Copyright>© Tacitine Consulting Pvt. Ltd. All rights reserved.</Copyright>
      <WindowsTaskbar />
    </Screen>
  );
};

export default App;
